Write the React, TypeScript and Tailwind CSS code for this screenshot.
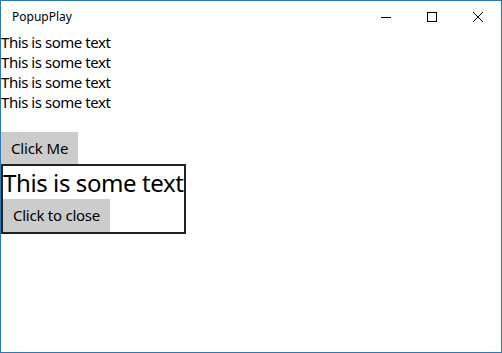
const font = { fontFamily: '"Noto Sans", "Open Sans", sans-serif' };

function TitleBar() {
  return (
    <div className="flex h-[31px] items-center bg-white">
      <span className="flex-1 pl-[11px] text-[12px] text-black">PopupPlay</span>
      <div className="flex h-full">
        <div className="flex w-[46px] items-center justify-center">
          <svg width="10" height="10" viewBox="0 0 10 10">
            <path d="M0 5.5h10" stroke="#000" strokeWidth="1" />
          </svg>
        </div>
        <div className="flex w-[46px] items-center justify-center">
          <svg width="10" height="10" viewBox="0 0 10 10">
            <rect x="0.5" y="0.5" width="9" height="9" fill="none" stroke="#000" strokeWidth="1" />
          </svg>
        </div>
        <div className="flex w-[46px] items-center justify-center">
          <svg width="10" height="10" viewBox="0 0 10 10">
            <path d="M0 0L10 10M10 0L0 10" stroke="#000" strokeWidth="1" />
          </svg>
        </div>
      </div>
    </div>
  );
}

export default function App() {
  return (
    <div
      className="flex h-[353px] w-[502px] flex-col border border-[#2b79b5] bg-white text-black"
      style={font}
    >
      <TitleBar />
      <div className="flex flex-col items-start">
        {[0, 1, 2, 3].map((i) => (
          <div key={i} className="h-5 text-[15px] leading-5 tracking-[-0.45px]">
            This is some text
          </div>
        ))}
        <div className="h-5" />
        <button className="h-8 bg-[#cccccc] px-[10px] text-[15px] tracking-[-0.15px]">Click Me</button>
        <div className="flex flex-col items-start border-2 border-[#222]">
          <div className="h-[33px] text-[24px] leading-[33px] tracking-[-0.4px]">This is some text</div>
          <button className="h-[33px] bg-[#cccccc] px-[10px] text-[15px] tracking-[-0.25px]">
            Click to close
          </button>
        </div>
      </div>
    </div>
  );
}
